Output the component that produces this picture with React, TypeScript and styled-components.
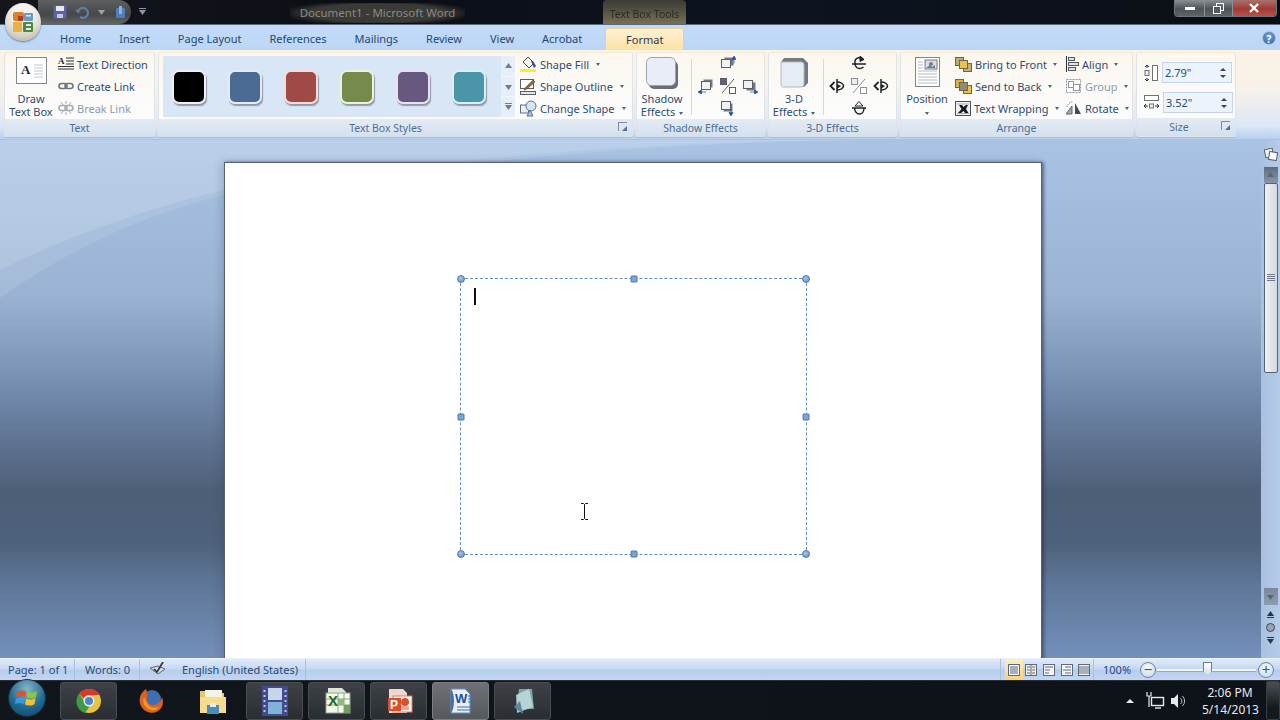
import React from 'react'
import styled, { createGlobalStyle } from 'styled-components'

const GlobalStyle = createGlobalStyle`
  html, body { margin: 0; padding: 0; height: 100%; overflow: hidden; }
  body { font-family: "Noto Sans", "Open Sans", sans-serif; font-size: 11px; }
  * { box-sizing: border-box; }
`

const Window = styled.div`
  position: relative;
  width: 1280px;
  height: 720px;
  display: flex;
  flex-direction: column;
  overflow: hidden;
  background: #bfd6f3;
`

/* title bar */
const TitleBar = styled.div`
  height: 25px;
  display: flex;
  background: linear-gradient(90deg, #14161c 0%, #0b0e15 30%, #0d1420 60%, #0c1119 85%, #0a0d12 100%);
  border-bottom: 1px solid #596a7e;
`
const Qat = styled.div`
  margin-left: 38px;
  width: 93px;
  height: 24px;
  padding-left: 15px;
  display: flex;
  align-items: center;
  gap: 8px;
  border-radius: 0 14px 14px 0;
  background: linear-gradient(180deg, #5d5f60, #454749 60%, #63655f);
`
const QatMenu = styled.div`
  margin-left: 4px;
  width: 14px;
  display: flex;
  align-items: center;
  justify-content: center;
`
const DocTitle = styled.div`
  margin: 3px 0 0 141px;
  width: 175px;
  height: 20px;
  line-height: 20px;
  text-align: center;
  font-size: 11.5px;
  color: #8b8b80;
  white-space: nowrap;
  background: radial-gradient(ellipse 55% 65% at 50% 50%, #3a3a37 70%, rgba(40, 40, 38, 0) 100%);
`
const ContextTitle = styled.div`
  margin-left: 138px;
  width: 83px;
  height: 24px;
  line-height: 28px;
  text-align: center;
  font-size: 10.5px;
  color: #2c2a22;
  white-space: nowrap;
  background: linear-gradient(180deg, #3b3a36 0%, #5a5747 55%, #77704f 100%);
  border-radius: 4px 4px 0 0;
  filter: blur(0.3px);
`
const WindowButtons = styled.div`
  margin-left: auto;
  margin-right: 3px;
  width: 103px;
  height: 17px;
  display: flex;
  border: 1px solid #6f757c;
  border-top: none;
  border-radius: 0 0 4px 4px;
  overflow: hidden;
`
const WinBtn = styled.div<{ $w: number; $close?: boolean }>`
  width: ${(p) => p.$w}px;
  display: flex;
  align-items: center;
  justify-content: center;
  background: ${(p) =>
    p.$close
      ? 'linear-gradient(180deg, #a8716c, #a33a33 55%, #b5524a)'
      : 'linear-gradient(180deg, #8a8f94, #4d5257 55%, #5f6468)'};
  & + & { border-left: 1px solid #8b9096; }
`
const Orb = styled.div`
  position: absolute;
  left: 5px;
  top: 3px;
  width: 36px;
  height: 38px;
  border-radius: 50%;
  display: flex;
  align-items: center;
  justify-content: center;
  background: radial-gradient(circle at 50% 30%, #f4f2ee 30%, #d7d3cb 65%, #a9a69d 100%);
  box-shadow: 0 1px 2px rgba(50, 60, 70, 0.6);
`

/* tabs */
const TabRow = styled.div`
  height: 25px;
  padding-left: 60px;
  padding-right: 4px;
  display: flex;
  align-items: center;
  gap: 28px;
  background: linear-gradient(180deg, #c3dbf8, #bdd6f6);
`
const Tab = styled.div`
  font-size: 11px;
  padding-top: 1px;
  color: #24486f;
  white-space: nowrap;
`
const ActiveTab = styled.div`
  margin-left: -5px;
  align-self: flex-end;
  width: 79px;
  height: 22px;
  line-height: 21px;
  text-align: center;
  font-size: 11px;
  color: #2b3a4d;
  border: 1px solid #e5cf9f;
  border-bottom: none;
  border-radius: 3px 3px 0 0;
  background: linear-gradient(180deg, #fff2d2, #fde1a5);
`
const HelpBtn = styled.div`
  margin-left: auto;
  width: 14px;
  height: 14px;
  border-radius: 50%;
  color: #fff;
  font-size: 10px;
  font-weight: 700;
  line-height: 14px;
  text-align: center;
  background: radial-gradient(circle at 50% 35%, #7ea6da, #2a5aa8);
  border: 1px solid #a9c4e6;
`

/* ribbon */
const Ribbon = styled.div`
  height: 90px;
  padding: 2px 0 0 4px;
  display: flex;
  gap: 3px;
  background: linear-gradient(180deg, #fbf3e4 0%, #f6f1ea 45%, #dce8f6 85%, #b7cfee 100%);
  border-bottom: 1px solid #b6c1cf;
`
const Group = styled.div<{ $w: number }>`
  width: ${(p) => p.$w}px;
  height: 85px;
  display: flex;
  flex-direction: column;
  border-radius: 3px;
  border: 1px solid #dfe4ea;
  border-top-color: #f1ead9;
  background: linear-gradient(180deg, #fcf7ef 0%, #fbfbfa 60%, #fbfcfd 100%);
  box-shadow: 0 1px 0 #aebccd;
`
const GroupBody = styled.div`
  height: 67px;
  display: flex;
`
const GroupLabel = styled.div<{ $pr?: number }>`
  position: relative;
  flex: 1;
  padding-right: ${(p) => p.$pr ?? 0}px;
  line-height: 18px;
  text-align: center;
  font-size: 10.5px;
  color: #4e6e92;
  background: linear-gradient(180deg, #e3ebf4, #d4e0ee);
`
const Launcher = styled.div`
  position: absolute;
  right: 5px;
  top: 3px;
  width: 9px;
  height: 9px;
  border: 1px solid #7b8ea5;
  border-width: 1px 0 0 1px;
  &::after {
    content: '';
    position: absolute;
    right: 0;
    bottom: 0;
    width: 5px;
    height: 5px;
    background: #56708f;
    clip-path: polygon(100% 0, 100% 100%, 0 100%);
  }
`
const BigButton = styled.div<{ $w: number; $ml?: number }>`
  width: ${(p) => p.$w}px;
  margin-left: ${(p) => p.$ml ?? 0}px;
  flex: none;
  display: flex;
  flex-direction: column;
  align-items: center;
`
const BigIcon = styled.div`
  height: 39px;
  padding-top: 4px;
`
const BigText = styled.div`
  font-size: 11px;
  line-height: 13px;
  text-align: center;
  color: #2f4d70;
  white-space: nowrap;
`
const SmallCol = styled.div<{ $w?: number; $ml?: number }>`
  ${(p) => (p.$w ? `width: ${p.$w}px;` : '')}
  margin-left: ${(p) => p.$ml ?? 0}px;
  display: flex;
  flex-direction: column;
`
const SmallBtn = styled.div<{ $off?: boolean }>`
  height: 22px;
  display: flex;
  align-items: center;
  gap: 3px;
  font-size: 11px;
  white-space: nowrap;
  color: ${(p) => (p.$off ? '#8c9aac' : '#2f4d70')};
  & > svg { flex: none; }
`
const Caret = styled.span<{ $ml?: number }>`
  display: inline-block;
  margin-left: ${(p) => p.$ml ?? 4}px;
  width: 0;
  height: 0;
  vertical-align: middle;
  border-left: 2.5px solid transparent;
  border-right: 2.5px solid transparent;
  border-top: 3px solid #4a6480;
`
const Divider = styled.div<{ $ml: number }>`
  width: 1px;
  height: 56px;
  margin: 6px 0 0 ${(p) => p.$ml}px;
  background: #d5d9dd;
`
const Gallery = styled.div`
  margin: 3px 0 0 4px;
  width: 352px;
  height: 61px;
  padding-left: 9px;
  display: flex;
  align-items: center;
  gap: 22px;
  background: #d8e6f6;
  position: relative;
`
const Swatch = styled.div<{ $c: string; $glow: string }>`
  width: 34px;
  height: 34px;
  border-radius: 7px;
  background: ${(p) => p.$c};
  border: 2px solid ${(p) => p.$glow};
  box-shadow: 1px 2px 1px rgba(60, 60, 70, 0.45);
`
const GalleryScroll = styled.div`
  position: absolute;
  right: 0;
  top: 0;
  width: 14px;
  height: 61px;
  display: flex;
  flex-direction: column;
  background: #e6eef8;
`
const ScrollCell = styled.div`
  flex: 1;
  display: flex;
  align-items: center;
  justify-content: center;
  color: #5c6f85;
  & + & { border-top: 1px solid #f2f6fb; }
`
const NudgeGrid = styled.div<{ $ml: number }>`
  margin: 0 0 0 ${(p) => p.$ml}px;
  display: grid;
  grid-template-columns: repeat(3, 22px);
  grid-auto-rows: 22px;
  place-items: center;
`
const SizeCol = styled.div`
  margin-left: 7px;
  padding-top: 9px;
  display: flex;
  flex-direction: column;
  gap: 9px;
`
const SizeRow = styled.div`
  display: flex;
  align-items: center;
  gap: 4px;
`
const SizeInput = styled.div`
  width: 70px;
  height: 21px;
  padding: 0 5px 0 2px;
  display: flex;
  align-items: center;
  justify-content: space-between;
  font-size: 11px;
  color: #2f4d70;
  border: 1px solid #c6d5e6;
  background: #edf3fa;
`
const Spin = styled.div`
  display: flex;
  flex-direction: column;
  gap: 4px;
`
const SpinArrow = styled.div<{ $down?: boolean }>`
  width: 0;
  height: 0;
  border-left: 3px solid transparent;
  border-right: 3px solid transparent;
  ${(p) => (p.$down ? 'border-top: 3px solid #33465c;' : 'border-bottom: 3px solid #33465c;')}
`

/* document area */
const Workspace = styled.div`
  height: 518px;
  display: flex;
  overflow: hidden;
`
const Canvas = styled.div`
  position: relative;
  width: 1261px;
  padding: 22px 0 0 224px;
  background: linear-gradient(
    180deg,
    #a9c3e4 0%,
    #9ab3d3 30%,
    #879fbf 40%,
    #6e86a8 50%,
    #5c708d 60%,
    #4d5e77 68%,
    #4f627b 78%,
    #5d7595 85%,
    #7390bb 100%
  );
`
const Swoosh = styled.svg`
  position: absolute;
  left: 0;
  top: 0;
  width: 1261px;
  height: 200px;
`
const Page = styled.div`
  position: relative;
  width: 818px;
  height: 520px;
  padding: 115px 0 0 236px;
  background: #fff;
  border: 1px solid #5a6170;
  border-bottom: none;
  box-shadow: 2px 0 3px rgba(40, 50, 70, 0.55), -3px 0 8px rgba(40, 50, 70, 0.18);
`
const TextBox = styled.div`
  position: relative;
  width: 347px;
  height: 277px;
  padding: 9px 0 0 13px;
  border: 1px dashed #5f8fc4;
  margin: 0 0 0 -1px;
`
const TextCaret = styled.div`
  width: 2px;
  height: 17px;
  background: #111;
`
const Handle = styled.div<{ $x: number; $y: number; $round?: boolean }>`
  position: absolute;
  left: ${(p) => p.$x}%;
  top: ${(p) => p.$y}%;
  width: ${(p) => (p.$round ? 8 : 7)}px;
  height: ${(p) => (p.$round ? 8 : 7)}px;
  transform: translate(-50%, -50%);
  border-radius: ${(p) => (p.$round ? '50%' : '1px')};
  background: ${(p) =>
    p.$round ? 'radial-gradient(circle at 40% 35%, #a9c6ea, #5e88c4)' : '#7ba3d6'};
  border: 1px solid #4f79ad;
`
const IBeam = styled.div`
  position: absolute;
  left: 119px;
  top: 224px;
`
const VScroll = styled.div`
  width: 19px;
  display: flex;
  flex-direction: column;
  align-items: center;
  background: linear-gradient(90deg, #a9c0e0, #b5cbe9);
`
const RulerToggle = styled.div`
  height: 27px;
  padding-top: 7px;
`
const ScrollUp = styled.div`
  width: 14px;
  height: 16px;
  display: flex;
  align-items: center;
  justify-content: center;
  background: linear-gradient(180deg, #5f6c7e, #8796a8);
`
const Thumb = styled.div`
  width: 14px;
  height: 190px;
  display: flex;
  align-items: center;
  justify-content: center;
  border: 1px solid #55647a;
  border-radius: 2px;
  background: linear-gradient(90deg, #f1f2f4, #d4d8dd);
`
const Grip = styled.div`
  width: 8px;
  height: 8px;
  background: repeating-linear-gradient(180deg, #6e7a88 0 1px, transparent 1px 2px);
`
const Track = styled.div`
  flex: 1;
`
const ScrollDown = styled.div`
  width: 14px;
  height: 17px;
  display: flex;
  align-items: center;
  justify-content: center;
  background: linear-gradient(180deg, #79889c, #8d9cb1);
`
const PageNav = styled.div`
  height: 53px;
  padding-top: 5px;
  display: flex;
  flex-direction: column;
  align-items: center;
  gap: 5px;
`

/* status bar */
const StatusBar = styled.div`
  height: 22px;
  display: flex;
  align-items: stretch;
  font-size: 11px;
  color: #2a4a72;
  border-top: 1px solid #ecf2fa;
  background: linear-gradient(180deg, #dfeafa 0%, #c6d9f3 45%, #b6cdee 55%, #c3d6f2 100%);
`
const StatusCell = styled.div<{ $w: number; $pl: number }>`
  width: ${(p) => p.$w}px;
  padding-left: ${(p) => p.$pl}px;
  display: flex;
  align-items: center;
  white-space: nowrap;
  border-right: 1px solid #a9bfdc;
`
const LanguageText = styled.span`
  margin-left: 16px;
`
const StatusRight = styled.div`
  margin-left: auto;
  padding-right: 6px;
  display: flex;
  align-items: center;
`
const ViewButtons = styled.div`
  margin-right: 9px;
  width: 94px;
  height: 21px;
  display: flex;
  border-left: 1px solid #a9bfdc;
  border-right: 1px solid #a9bfdc;
  padding-left: 4px;
`
const ViewBtn = styled.div<{ $on?: boolean }>`
  width: 18px;
  display: flex;
  align-items: center;
  justify-content: center;
  background: ${(p) => (p.$on ? 'linear-gradient(180deg, #fdeec5, #fad27c)' : 'transparent')};
`
const ZoomText = styled.div`
  width: 37px;
  color: #1d477a;
`
const ZoomBtn = styled.div`
  width: 16px;
  height: 16px;
  border-radius: 50%;
  display: flex;
  align-items: center;
  justify-content: center;
  font-size: 15px;
  line-height: 1;
  color: #44566c;
  border: 1px solid #6f85a0;
  background: radial-gradient(circle at 50% 35%, #f8fbfe, #c5d4e6);
`
const ZoomTrack = styled.div`
  position: relative;
  margin: 0 2px 0 1px;
  width: 99px;
  height: 2px;
  background: #f2f6fb;
  box-shadow: 0 1px 0 #94a9c4;
`
const ZoomThumb = styled.div`
  position: absolute;
  left: 46px;
  top: -7px;
  width: 9px;
  height: 14px;
  border: 1px solid #6d7f95;
  background: linear-gradient(180deg, #fff, #d5deea);
  clip-path: polygon(0 0, 100% 0, 100% 65%, 50% 100%, 0 65%);
`

/* taskbar */
const Taskbar = styled.div`
  flex: 1;
  display: flex;
  align-items: center;
  padding-left: 60px;
  gap: 5px;
  color: #e9edf2;
  background: linear-gradient(90deg, #11151c, #0f131a 45%, #0e1219);
  border-top: 1px solid #2a2f36;
`
const StartOrb = styled.div`
  position: absolute;
  left: 8px;
  bottom: 3px;
  width: 38px;
  height: 38px;
  border-radius: 50%;
  display: flex;
  align-items: center;
  justify-content: center;
  border: 1px solid #1c3040;
  background: radial-gradient(circle at 50% 25%, #88b4c8, #1f6b93 55%, #10405e);
`
const TaskBtn = styled.div<{ $state?: 'plain' | 'open' | 'active' }>`
  width: 57px;
  height: 38px;
  display: flex;
  align-items: center;
  justify-content: center;
  border-radius: 3px;
  border: 1px solid ${(p) => (p.$state === 'plain' ? 'transparent' : p.$state === 'active' ? '#7b7f84' : '#494d52')};
  background: ${(p) =>
    p.$state === 'plain'
      ? 'transparent'
      : p.$state === 'active'
        ? 'linear-gradient(180deg, #6e7175, #55585c)'
        : 'linear-gradient(180deg, #3e4145, #2a2d31)'};
`
const Tray = styled.div`
  margin-left: auto;
  display: flex;
  align-items: center;
  gap: 5px;
  height: 100%;
`
const TrayUp = styled.div`
  width: 0;
  height: 0;
  margin-right: 6px;
  border-left: 4px solid transparent;
  border-right: 4px solid transparent;
  border-bottom: 4px solid #e8ebee;
`
const Clock = styled.div`
  margin-left: 11px;
  width: 56px;
  text-align: center;
  font-size: 12px;
  line-height: 17px;
  color: #e6e9ed;
  white-space: nowrap;
`
const ShowDesktop = styled.div`
  margin-left: 3px;
  width: 14px;
  height: 39px;
  border: 1px solid #3a3e44;
  border-radius: 2px;
  background: linear-gradient(180deg, #4b4f54, #15181d 70%);
`

const Svg: React.FC<{ w: number; h: number; children: React.ReactNode }> = ({ w, h, children }) => (
  <svg width={w} height={h} viewBox={`0 0 ${w} ${h}`} fill="none">
    {children}
  </svg>
)

const OfficeLogo = () => (
  <Svg w={24} h={24}>
    <rect x="2" y="2" width="11" height="9" rx="2" fill="#d9822b" />
    <rect x="13" y="3" width="9" height="8" rx="1" fill="#6d9bc5" />
    <rect x="2" y="12" width="9" height="10" rx="1" fill="#eab042" />
    <rect x="12" y="12" width="10" height="10" rx="1" fill="#4f8a3c" />
    <rect x="7" y="6" width="5" height="5" fill="#a8431f" />
    <rect x="15" y="14" width="5" height="2" fill="#e8efe2" />
    <rect x="15" y="18" width="5" height="2" fill="#e8efe2" />
    <rect x="15" y="5" width="5" height="1.5" fill="#dfeaf4" />
  </Svg>
)
const SaveIcon = () => (
  <Svg w={14} h={14}>
    <rect x="0.5" y="0.5" width="13" height="13" rx="1" fill="#5c62a8" />
    <rect x="3" y="1" width="8" height="5" fill="#e6e8f0" />
    <rect x="4" y="9" width="6" height="4" fill="#c5c8d6" />
  </Svg>
)
const UndoIcon = () => (
  <Svg w={14} h={14}>
    <path d="M3 7a5 5 0 1 1 2 5" stroke="#5d7fa6" strokeWidth="2.2" />
    <path d="M0 5l5-1-1 5z" fill="#5d7fa6" />
  </Svg>
)
const RedoIcon = () => (
  <Svg w={13} h={14}>
    <rect x="2" y="3" width="9" height="10" rx="1" fill="#4f7fb8" />
    <rect x="5" y="1" width="3" height="8" fill="#8fb2db" />
  </Svg>
)
const TextBoxIcon = () => (
  <Svg w={31} h={27}>
    <rect x="0.5" y="0.5" width="30" height="26" fill="#fff" stroke="#7e8894" />
    <text x="5" y="17" fontSize="13" fontWeight="700" fontFamily="Liberation Serif, serif" fill="#23282e">A</text>
    <path d="M18 8h9M18 11h9M18 14h9M18 17h9M18 20h9" stroke="#c3c8ce" />
  </Svg>
)
const TextDirIcon = () => (
  <Svg w={16} h={16}>
    <text x="0" y="8" fontSize="9" fontWeight="700" fontFamily="Liberation Serif, serif" fill="#2b2f36">A</text>
    <path d="M8 2h8M8 5h8M8 8h8M0 10.5h16M0 13h16" stroke="#2b2f36" />
  </Svg>
)
const LinkIcon: React.FC<{ off?: boolean }> = ({ off }) => (
  <Svg w={16} h={16}>
    {off && <path d="M3 2l2 3M8 1v3M13 2l-2 3M3 14l2-3M8 15v-3M13 14l-2-3" stroke="#a6acb4" />}
    <rect x="1" y="5.5" width="8" height="5" rx="2.5" stroke={off ? '#a6acb4' : '#6e747c'} strokeWidth="1.6" />
    <rect x="7" y="5.5" width="8" height="5" rx="2.5" stroke={off ? '#a6acb4' : '#6e747c'} strokeWidth="1.6" />
  </Svg>
)
const FillIcon = () => (
  <Svg w={17} h={17}>
    <path d="M8 1l6 6-5 5-6-6z" fill="#f2f2f0" stroke="#4b4f55" />
    <path d="M11 5h2l3 5-2 2z" fill="#2f4f9e" />
    <rect x="0" y="13" width="16" height="3" fill="#f4f02c" />
  </Svg>
)
const OutlineIcon = () => (
  <Svg w={17} h={17}>
    <rect x="0.5" y="1.5" width="13" height="9" fill="#fff" stroke="#5a5f66" />
    <path d="M5 10L13 2l2 2-8 7-3 1z" fill="#8f6a3a" stroke="#4f4a40" strokeWidth="0.6" />
    <rect x="0.5" y="13.5" width="15" height="3" fill="#e4e6e8" stroke="#5a5f66" />
  </Svg>
)
const ChangeShapeIcon = () => (
  <Svg w={17} h={17}>
    <rect x="0.5" y="5" width="8" height="8" fill="#e8f0fa" stroke="#5e7189" />
    <circle cx="11" cy="6" r="5" fill="#d5e4f5" stroke="#5e7189" />
    <path d="M7 16l3-6 3 6z" fill="#a9c4e4" stroke="#5e7189" />
  </Svg>
)
const ShadowBig = () => (
  <Svg w={33} h={33}>
    <rect x="3" y="4" width="29" height="28" rx="5" fill="#6a6d72" />
    <rect x="0.5" y="0.5" width="29" height="28" rx="5" fill="#e9edf8" stroke="#9ea4ad" />
  </Svg>
)
const Bevel3D = () => (
  <Svg w={29} h={32}>
    <path d="M4 1h19l5 5v20l-4 4H5l-4-4V5z" fill="#75797e" />
    <path d="M1 5h20a3 3 0 0 1 3 3v19a3 3 0 0 1-3 3H5a3 3 0 0 1-4-3z" fill="#e6ecf5" stroke="#b4b9bf" />
  </Svg>
)
const NudgeIcon: React.FC<{ dir: 'up' | 'down' | 'left' | 'right' }> = ({ dir }) => {
  const arrows = {
    up: 'M14 0l2 3.500h-4zM14 3.500v4',
    down: 'M11 16l2-3.500H9zM11 12.500V9',
    left: 'M0 14l3.500-2v4zM3.500 14H8',
    right: 'M16 14l-3.500-2v4zM12.500 14H8',
  }
  const shadow = {
    up: { x: 4.5, y: 1.5 },
    down: { x: 3.5, y: 3.5 },
    left: { x: 5.5, y: 1.5 },
    right: { x: 4.5, y: 4.5 },
  }
  const front = {
    up: { x: 1.5, y: 3.5 },
    down: { x: 1.5, y: 1.5 },
    left: { x: 3.5, y: 3.5 },
    right: { x: 1.5, y: 2.5 },
  }
  return (
    <Svg w={16} h={16}>
      <rect x={shadow[dir].x} y={shadow[dir].y} width="9" height="8" fill="#75797f" />
      <rect x={front[dir].x} y={front[dir].y} width="9" height="8" fill="#eef1f5" stroke="#5a5f66" />
      <path d={arrows[dir]} fill="#1f4f9a" stroke="#1f4f9a" strokeWidth="0.7" />
    </Svg>
  )
}
const PercentIcon: React.FC<{ dim?: boolean }> = ({ dim }) => (
  <Svg w={16} h={16}>
    <rect x="0.5" y="0.5" width="6" height="6" fill={dim ? '#eceef1' : '#62666c'} stroke={dim ? '#8b9199' : '#5a5f66'} />
    <rect x="9.5" y="9.5" width="6" height="6" fill="#fff" stroke={dim ? '#8b9199' : '#5a5f66'} />
    <path d="M14 1L2 15" stroke={dim ? '#8b9199' : '#5a5f66'} />
  </Svg>
)
const TiltSide = () => (
  <Svg w={16} h={16}>
    <path d="M8 1v14" stroke="#1e2227" strokeWidth="1.5" />
    <path d="M5.500 4L1.500 8l4 4" stroke="#1e2227" strokeWidth="1.800" />
    <path d="M8 4c4 0 6.500 2 6.500 4S12 12 8 12" stroke="#1e2227" strokeWidth="1.500" />
    <path d="M8 6l4 2-4 3z" fill="#1e2227" />
  </Svg>
)
const TiltUpDown: React.FC<{ up?: boolean }> = ({ up }) => (
  <Svg w={16} h={16}>
    <path d="M1 8h14" stroke="#1e2227" strokeWidth="1.500" />
    <path d={up ? 'M12 3.500C10 1 5 1 4 5c-.7 3 .5 7 4 7.500 2 .2 3.500-.5 4.500-1.500' : 'M3.500 8c0 3 2 6 5 6s4.500-3 4.500-6'} stroke="#1e2227" strokeWidth="1.500" />
    <path d={up ? 'M9 0l4 3.500-4 2z' : 'M8 1.500L4 6h8z'} fill={up ? '#1e2227' : 'none'} stroke="#1e2227" />
  </Svg>
)
const PositionIcon = () => (
  <Svg w={25} h={30}>
    <rect x="0.5" y="0.5" width="24" height="29" fill="#fff" stroke="#7e8894" />
    <path d="M3 5h5M3 8h5M3 11h5M3 14h19M3 17h19M3 20h19M3 23h19M3 26h19" stroke="#b6bbc1" />
    <rect x="10" y="3" width="12" height="9" fill="#d5dfe9" stroke="#727c87" />
    <circle cx="16" cy="7" r="2" fill="#8b7a62" />
    <path d="M11 11l4-3 2 2 3-2v3z" fill="#5e81a6" />
  </Svg>
)
const StackIcon: React.FC<{ front?: boolean }> = ({ front }) => (
  <Svg w={17} h={16}>
    <rect x="0.5" y="1.5" width="8" height="8" fill={front ? '#b8ab82' : '#d8b04a'} stroke="#72663e" />
    <rect x="8.5" y="7.5" width="8" height="8" fill={front ? '#c0b185' : '#eec04f'} stroke="#72663e" />
    <rect x="4.5" y="4.5" width="8" height="8" fill={front ? '#eec04f' : '#8f8a72'} stroke="#72663e" />
  </Svg>
)
const WrapIcon = () => (
  <Svg w={16} h={15}>
    <rect x="0.5" y="0.5" width="15" height="14" fill="#eef0f3" stroke="#4a5057" />
    <path d="M2 3h12M2 12.500h12" stroke="#a9aeb5" />
    <path d="M3 12l3.500-4L4 4h3l1.500 2L11 4h2l-2 4 2.500 4H10L8.500 10 6 12z" fill="#16181c" />
  </Svg>
)
const AlignIcon = () => (
  <Svg w={14} h={16}>
    <path d="M1.5 0v16" stroke="#2d3136" />
    <rect x="3.5" y="1.5" width="6" height="3" fill="#dfe4ea" stroke="#52585f" />
    <rect x="3.5" y="6.5" width="10" height="3" fill="#dfe4ea" stroke="#52585f" />
    <rect x="3.5" y="11.5" width="7" height="3" fill="#dfe4ea" stroke="#52585f" />
  </Svg>
)
const GroupIcon = () => (
  <Svg w={17} h={16}>
    <rect x="1.5" y="1.5" width="14" height="13" stroke="#8f98a3" strokeDasharray="2 1" />
    <rect x="3.5" y="3.5" width="5" height="6" fill="#fff" stroke="#8f98a3" />
    <rect x="8.5" y="6.5" width="6" height="6" fill="#fff" stroke="#8f98a3" />
  </Svg>
)
const RotateIcon = () => (
  <Svg w={17} h={16}>
    <path d="M1 14L7 6v8z" fill="#a5a9ae" stroke="#62676d" />
    <path d="M10 14V3l6 11z" fill="#3e4c5c" />
    <path d="M2 7a6 6 0 0 1 6-5" stroke="#5f6670" strokeDasharray="1 1" />
  </Svg>
)
const HeightIcon = () => (
  <Svg w={14} h={16}>
    <path d="M3 0v3M3 13v3M1 2l2-2 2 2M1 14l2 2 2-2" stroke="#2b3036" />
    <rect x="1" y="5.500" width="4" height="5" fill="#e9edf2" stroke="#6b727a" />
    <rect x="8.500" y="0.500" width="5" height="15" fill="#fff" stroke="#6b727a" />
  </Svg>
)
const WidthIcon = () => (
  <Svg w={15} h={15}>
    <rect x="0.5" y="0.5" width="14" height="5" fill="#fff" stroke="#6b727a" />
    <path d="M0 11h4M11 11h4M2 9l-2 2 2 2M13 9l2 2-2 2" stroke="#2b3036" />
    <rect x="5.500" y="9" width="4" height="4" fill="#e9edf2" stroke="#6b727a" />
  </Svg>
)
const RulerIcon = () => (
  <Svg w={14} h={14}>
    <rect x="1" y="2" width="8" height="8" fill="#eef0f3" stroke="#555e69" transform="rotate(-12 5 6)" />
    <rect x="5" y="5" width="8" height="8" fill="#f8f9fa" stroke="#555e69" transform="rotate(10 9 9)" />
  </Svg>
)
const ArrowGlyph: React.FC<{ up?: boolean; bar?: boolean; c?: string }> = ({ up, bar, c = '#2a3646' }) => (
  <Svg w={9} h={8}>
    <path d={up ? 'M4.5 1L8 6H1z' : 'M1 2h7L4.5 7z'} fill={c} />
    {bar && <path d={up ? 'M1 7.5h7' : 'M1 0.5h7'} stroke={c} />}
  </Svg>
)
const ProofIcon = () => (
  <Svg w={17} h={15}>
    <path d="M1 6l8-2 7 3-7 5z" fill="#d5dbe3" stroke="#5e6772" />
    <path d="M5 7l3 3 6-10" stroke="#2f3338" strokeWidth="1.7" />
  </Svg>
)
const ViewIcon: React.FC<{ lines: string; book?: boolean }> = ({ lines, book }) => (
  <Svg w={14} h={14}>
    <rect x="1.5" y="1.5" width="11" height="11" fill={book ? '#f2f0e2' : '#f2f5f9'} stroke="#5e6a78" />
    {book && <path d="M7 1v12" stroke="#5e6a78" />}
    <path d={lines} stroke="#5e6a78" />
  </Svg>
)
const IBeamGlyph = () => (
  <Svg w={9} h={17}>
    <path d="M1 .5h2.500L4.500 1.500 5.500 .5H8M4.500 1.500v14M1 16.500h2.500l1-1 1 1H8" stroke="#111" />
  </Svg>
)
const WinFlag = () => (
  <Svg w={24} h={24}>
    <path d="M2 6c3-2 6-2 9-.5L10 11c-3-1.500-6-1.500-9 0z" fill="#e2502e" />
    <path d="M12.500 5.500c3 1.500 6 1.500 9.500-.5l-1 6c-3 2-6 2-9.500.5z" fill="#8ec63f" />
    <path d="M1 12.500c3-1.500 6-1.500 9 0L9 18c-3-1.500-6-1.500-9 0z" fill="#3a9bdc" />
    <path d="M11 12.500c3 1.500 6 1.500 9.500-.5l-1 6c-3 2-6 2-9.500.5z" fill="#f6c02c" />
  </Svg>
)
const ChromeIcon = () => (
  <Svg w={26} h={26}>
    <circle cx="13" cy="13" r="12" fill="#e8c33b" />
    <path d="M13 1A12 12 0 0 1 23.400 7H13a6 6 0 0 0-5.500 3.500L3.500 5.500A12 12 0 0 1 13 1z" fill="#d8392b" />
    <path d="M3.500 5.500l4.500 8a6 6 0 0 0 5.500 5L9 25A12 12 0 0 1 3.500 5.500z" fill="#3d9a46" />
    <circle cx="13" cy="13" r="5.500" fill="#e8edf4" />
    <circle cx="13" cy="13" r="4" fill="#4f83cc" />
  </Svg>
)
const FirefoxIcon = () => (
  <Svg w={26} h={28}>
    <circle cx="14" cy="12" r="9" fill="#3d6fb3" />
    <path d="M8 2C2 6 0 13 3 19c3 6 11 9 17 5 5-3 6-9 4-14-1 5-5 8-9 8-5 0-7-4-6-8 1-3 0-5-1-8z" fill="#d9631e" />
    <path d="M6 10c-2 5 0 11 7 13 4 1 7-1 8-3-5 2-10 0-12-4-1-2-2-4-3-6z" fill="#f09a24" />
  </Svg>
)
const FolderIcon = () => (
  <Svg w={28} h={28}>
    <path d="M1 4h9l2 2h13v12H1z" fill="#e8c66d" />
    <rect x="6" y="3" width="17" height="10" fill="#f6f4e6" />
    <path d="M1 10h26v16H1z" fill="#f6dc8e" />
    <path d="M8 27v-9h12v9" fill="#4d8cb8" />
    <rect x="11" y="16" width="6" height="4" fill="#e5eef4" />
  </Svg>
)
const FilmIcon = () => (
  <Svg w={26} h={30}>
    <rect x="0" y="0" width="26" height="30" fill="#434a8e" />
    <rect x="6" y="2" width="14" height="12" fill="#c7d5e8" />
    <rect x="6" y="16" width="14" height="12" fill="#7fb3da" />
    <path d="M2.500 4v2M2.500 9v2M2.500 14v2M2.500 19v2M2.500 24v2M23.500 4v2M23.500 9v2M23.500 14v2M23.500 19v2M23.500 24v2" stroke="#bdc4e2" strokeWidth="2" />
  </Svg>
)
const ExcelIcon = () => (
  <Svg w={28} h={28}>
    <path d="M5 1h14l4 4v3H5z" fill="#dfe6d8" />
    <rect x="3" y="6" width="24" height="20" fill="#f4f7ee" stroke="#94a686" />
    <path d="M3 12h24M3 18h24M15 6v20M21 6v20" stroke="#86ab73" />
    <rect x="15" y="12" width="6" height="6" fill="#8eb87c" />
    <rect x="21" y="18" width="6" height="8" fill="#6f9f62" />
    <text x="5" y="19" fontSize="15" fontWeight="700" fontFamily="Liberation Sans, sans-serif" fill="#1f6b2c">X</text>
  </Svg>
)
const PptIcon = () => (
  <Svg w={28} h={28}>
    <path d="M4 2h14l4 4v20H4z" fill="#f1d6cb" />
    <rect x="8" y="9" width="19" height="16" fill="#fff" stroke="#d97a56" />
    <rect x="3" y="11" width="13" height="13" fill="#d9512c" />
    <circle cx="20" cy="15" r="4" fill="#d9512c" />
    <path d="M10 20h14M10 22h14" stroke="#d9512c" />
    <text x="5" y="22" fontSize="12" fontWeight="700" fontFamily="Liberation Sans, sans-serif" fill="#fff">P</text>
  </Svg>
)
const WordIcon = () => (
  <Svg w={28} h={28}>
    <path d="M4 2h14l5 5v19H4z" fill="#e8eef6" stroke="#6a8cc0" />
    <path d="M4 2c4 5 4 19 0 24z" fill="#3f6fb4" />
    <path d="M10 20h15M10 23h15" stroke="#3f6fb4" />
    <text x="8" y="16" fontSize="13" fontWeight="700" fontFamily="Liberation Sans, sans-serif" fill="#23509c">W</text>
    <path d="M21 9h6M21 12h6M21 15h6" stroke="#3f6fb4" />
  </Svg>
)
const NoteIcon = () => (
  <Svg w={24} h={28}>
    <path d="M8 2h13l2 20H5z" fill="#79a8a4" />
    <path d="M5 8l13-6 4 18-16 6z" fill="#c3dbe0" opacity="0.85" />
    <path d="M3 20l6-6 3 13z" fill="#5c8ba0" />
  </Svg>
)
const NetIcon = () => (
  <Svg w={20} h={18}>
    <rect x="6.500" y="5.500" width="12" height="8" stroke="#e6e9ed" strokeWidth="1.400" />
    <path d="M10 16h6" stroke="#e6e9ed" strokeWidth="1.400" />
    <path d="M2 0v4h4V0M4 4v11" stroke="#e6e9ed" strokeWidth="1.200" />
  </Svg>
)
const VolumeIcon = () => (
  <Svg w={16} h={16}>
    <path d="M1 5h3l4-4v14l-4-4H1z" fill="#e6e9ed" />
    <path d="M10.500 5a4 4 0 0 1 0 6M12.500 3a7 7 0 0 1 0 10" stroke="#b6bbc1" />
  </Svg>
)

const swatches = [
  { c: '#000', glow: '#f0f0f0' },
  { c: '#4b6a94', glow: '#e3edf8' },
  { c: '#a04a47', glow: '#f4dcdc' },
  { c: '#758a4b', glow: '#edf2da' },
  { c: '#66587f', glow: '#e9e1ef' },
  { c: '#4a95a8', glow: '#d8f1f6' },
]

const handles = [
  { x: 0, y: 0, round: true },
  { x: 50, y: 0 },
  { x: 100, y: 0, round: true },
  { x: 0, y: 50 },
  { x: 100, y: 50 },
  { x: 0, y: 100, round: true },
  { x: 50, y: 100 },
  { x: 100, y: 100, round: true },
]

const tabs = ['Home', 'Insert', 'Page Layout', 'References', 'Mailings', 'Review', 'View', 'Acrobat']

export default function App() {
  return (
    <Window>
      <GlobalStyle />
      <TitleBar>
        <Qat>
          <SaveIcon />
          <UndoIcon />
          <ArrowGlyph c="#9aa3ad" />
          <RedoIcon />
        </Qat>
        <QatMenu>
          <ArrowGlyph bar c="#8e949b" />
        </QatMenu>
        <DocTitle>Document1 - Microsoft Word</DocTitle>
        <ContextTitle>Text Box Tools</ContextTitle>
        <WindowButtons>
          <WinBtn $w={30}>
            <Svg w={12} h={6}>
              <rect x="1" y="2" width="10" height="3" fill="#fff" />
            </Svg>
          </WinBtn>
          <WinBtn $w={28}>
            <Svg w={11} h={11}>
              <rect x="3.500" y="0.500" width="7" height="7" stroke="#fff" />
              <rect x="0.500" y="3.500" width="7" height="7" stroke="#fff" fill="#555a60" />
            </Svg>
          </WinBtn>
          <WinBtn $w={45} $close>
            <Svg w={12} h={10}>
              <path d="M2 1l8 8M10 1L2 9" stroke="#fff" strokeWidth="2.400" />
            </Svg>
          </WinBtn>
        </WindowButtons>
      </TitleBar>
      <Orb>
        <OfficeLogo />
      </Orb>

      <TabRow>
        {tabs.map((t) => (
          <Tab key={t}>{t}</Tab>
        ))}
        <ActiveTab>Format</ActiveTab>
        <HelpBtn>?</HelpBtn>
      </TabRow>

      <Ribbon>
        <Group $w={151}>
          <GroupBody>
            <BigButton $w={52}>
              <BigIcon>
                <TextBoxIcon />
              </BigIcon>
              <BigText>
                Draw
                <br />
                Text Box
              </BigText>
            </BigButton>
            <SmallCol $ml={1}>
              <SmallBtn>
                <TextDirIcon />
                Text Direction
              </SmallBtn>
              <SmallBtn>
                <LinkIcon />
                Create Link
              </SmallBtn>
              <SmallBtn $off>
                <LinkIcon off />
                Break Link
              </SmallBtn>
            </SmallCol>
          </GroupBody>
          <GroupLabel>Text</GroupLabel>
        </Group>

        <Group $w={475}>
          <GroupBody>
            <Gallery>
              {swatches.map((s) => (
                <Swatch key={s.c} $c={s.c} $glow={s.glow} />
              ))}
              <GalleryScroll>
                <ScrollCell>
                  <ArrowGlyph up c="#6d7f93" />
                </ScrollCell>
                <ScrollCell>
                  <ArrowGlyph c="#6d7f93" />
                </ScrollCell>
                <ScrollCell>
                  <ArrowGlyph bar c="#6d7f93" />
                </ScrollCell>
              </GalleryScroll>
            </Gallery>
            <SmallCol $ml={5}>
              <SmallBtn>
                <FillIcon />
                Shape Fill
                <Caret />
              </SmallBtn>
              <SmallBtn>
                <OutlineIcon />
                Shape Outline
                <Caret />
              </SmallBtn>
              <SmallBtn>
                <ChangeShapeIcon />
                Change Shape
                <Caret />
              </SmallBtn>
            </SmallCol>
          </GroupBody>
          <GroupLabel $pr={20}>
            Text Box Styles
            <Launcher />
          </GroupLabel>
        </Group>

        <Group $w={129}>
          <GroupBody>
            <BigButton $w={50}>
              <BigIcon>
                <ShadowBig />
              </BigIcon>
              <BigText>
                Shadow
                <br />
                Effects
                <Caret />
              </BigText>
            </BigButton>
            <Divider $ml={4} />
            <NudgeGrid $ml={3}>
              <span />
              <NudgeIcon dir="up" />
              <span />
              <NudgeIcon dir="left" />
              <PercentIcon />
              <NudgeIcon dir="right" />
              <span />
              <NudgeIcon dir="down" />
              <span />
            </NudgeGrid>
          </GroupBody>
          <GroupLabel>Shadow Effects</GroupLabel>
        </Group>

        <Group $w={129}>
          <GroupBody>
            <BigButton $w={50}>
              <BigIcon>
                <Bevel3D />
              </BigIcon>
              <BigText>
                3-D
                <br />
                Effects
                <Caret />
              </BigText>
            </BigButton>
            <Divider $ml={4} />
            <NudgeGrid $ml={2}>
              <span />
              <TiltUpDown up />
              <span />
              <TiltSide />
              <PercentIcon dim />
              <TiltSide />
              <span />
              <TiltUpDown />
              <span />
            </NudgeGrid>
          </GroupBody>
          <GroupLabel>3-D Effects</GroupLabel>
        </Group>

        <Group $w={233}>
          <GroupBody>
            <BigButton $w={50} $ml={1}>
              <BigIcon>
                <PositionIcon />
              </BigIcon>
              <BigText>
                Position
                <br />
                <Caret $ml={0} />
              </BigText>
            </BigButton>
            <SmallCol $w={110} $ml={3}>
              <SmallBtn>
                <StackIcon front />
                Bring to Front
                <Caret $ml={3} />
              </SmallBtn>
              <SmallBtn>
                <StackIcon />
                Send to Back
                <Caret $ml={3} />
              </SmallBtn>
              <SmallBtn>
                <WrapIcon />
                Text Wrapping
                <Caret $ml={3} />
              </SmallBtn>
            </SmallCol>
            <SmallCol>
              <SmallBtn>
                <AlignIcon />
                Align
                <Caret $ml={3} />
              </SmallBtn>
              <SmallBtn $off>
                <GroupIcon />
                Group
                <Caret $ml={3} />
              </SmallBtn>
              <SmallBtn>
                <RotateIcon />
                Rotate
                <Caret $ml={3} />
              </SmallBtn>
            </SmallCol>
          </GroupBody>
          <GroupLabel>Arrange</GroupLabel>
        </Group>

        <Group $w={100}>
          <GroupBody>
            <SizeCol>
              <SizeRow>
                <HeightIcon />
                <SizeInput>
                  2.79"
                  <Spin>
                    <SpinArrow />
                    <SpinArrow $down />
                  </Spin>
                </SizeInput>
              </SizeRow>
              <SizeRow>
                <WidthIcon />
                <SizeInput>
                  3.52"
                  <Spin>
                    <SpinArrow />
                    <SpinArrow $down />
                  </Spin>
                </SizeInput>
              </SizeRow>
            </SizeCol>
          </GroupBody>
          <GroupLabel $pr={14}>
            Size
            <Launcher />
          </GroupLabel>
        </Group>
      </Ribbon>

      <Workspace>
        <Canvas>
          <Swoosh viewBox="0 0 1261 200" preserveAspectRatio="none">
            <path d="M0 130C60 100 140 70 224 50C500 10 700 0 900 0H0Z" fill="#fff" opacity="0.12" />
            <path d="M0 158C60 115 140 75 224 55C500 15 700 0 900 0H0Z" fill="#fff" opacity="0.1" />
          </Swoosh>
          <Page>
            <TextBox>
              <TextCaret />
              {handles.map((h) => (
                <Handle key={`${h.x}-${h.y}`} $x={h.x} $y={h.y} $round={h.round} />
              ))}
              <IBeam>
                <IBeamGlyph />
              </IBeam>
            </TextBox>
          </Page>
        </Canvas>
        <VScroll>
          <RulerToggle>
            <RulerIcon />
          </RulerToggle>
          <ScrollUp>
            <ArrowGlyph up c="#5a6675" />
          </ScrollUp>
          <Thumb>
            <Grip />
          </Thumb>
          <Track />
          <ScrollDown>
            <ArrowGlyph c="#5a6675" />
          </ScrollDown>
          <PageNav>
            <ArrowGlyph up bar />
            <Svg w={9} h={9}>
              <circle cx="4.500" cy="4.500" r="4" fill="#9aa4b0" stroke="#3d4854" />
            </Svg>
            <ArrowGlyph bar />
          </PageNav>
        </VScroll>
      </Workspace>

      <StatusBar>
        <StatusCell $w={75} $pl={8}>Page: 1 of 1</StatusCell>
        <StatusCell $w={65} $pl={10}>Words: 0</StatusCell>
        <StatusCell $w={166} $pl={9}>
          <ProofIcon />
          <LanguageText>English (United States)</LanguageText>
        </StatusCell>
        <StatusRight>
          <ViewButtons>
            <ViewBtn $on>
              <ViewIcon lines="M3 4h8M3 6h8M3 8h8M3 10h8" />
            </ViewBtn>
            <ViewBtn>
              <ViewIcon book lines="M3 4h3M8 4h3M3 7h3M8 7h3M3 10h3M8 10h3" />
            </ViewBtn>
            <ViewBtn>
              <ViewIcon lines="M3 4h8M3 7h5M3 10h4" />
            </ViewBtn>
            <ViewBtn>
              <ViewIcon lines="M5 4h6M3 7h8M5 10h6" />
            </ViewBtn>
            <ViewBtn>
              <ViewIcon lines="M2 4h10M2 6h10M2 8h10M2 10h10" />
            </ViewBtn>
          </ViewButtons>
          <ZoomText>100%</ZoomText>
          <ZoomBtn>−</ZoomBtn>
          <ZoomTrack>
            <ZoomThumb />
          </ZoomTrack>
          <ZoomBtn>+</ZoomBtn>
        </StatusRight>
      </StatusBar>

      <Taskbar>
        <StartOrb>
          <WinFlag />
        </StartOrb>
        <TaskBtn $state="open">
          <ChromeIcon />
        </TaskBtn>
        <TaskBtn $state="plain">
          <FirefoxIcon />
        </TaskBtn>
        <TaskBtn $state="plain">
          <FolderIcon />
        </TaskBtn>
        <TaskBtn $state="open">
          <FilmIcon />
        </TaskBtn>
        <TaskBtn $state="open">
          <ExcelIcon />
        </TaskBtn>
        <TaskBtn $state="open">
          <PptIcon />
        </TaskBtn>
        <TaskBtn $state="active">
          <WordIcon />
        </TaskBtn>
        <TaskBtn $state="open">
          <NoteIcon />
        </TaskBtn>
        <Tray>
          <TrayUp />
          <NetIcon />
          <VolumeIcon />
          <Clock>
            2:06 PM
            <br />
            5/14/2013
          </Clock>
          <ShowDesktop />
        </Tray>
      </Taskbar>
    </Window>
  )
}
